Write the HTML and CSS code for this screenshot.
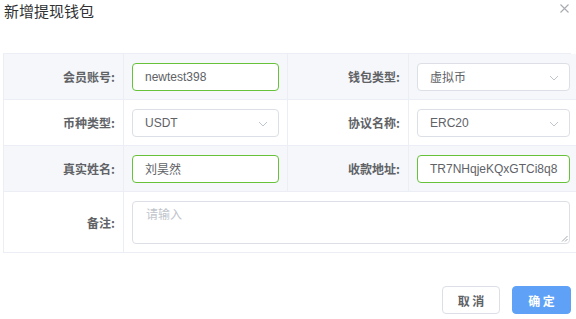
FILE: index.html
```html
<!DOCTYPE html>
<html lang="zh-CN">
<head>
<meta charset="utf-8">
<title>新增提现钱包</title>
<link rel="stylesheet" href="styles.css">
</head>
<body>
<div class="dialog">
  <div class="dialog-header">
    <span class="dialog-title">新增提现钱包</span>
    <button class="close" aria-label="关闭">
      <svg width="9" height="9" viewBox="0 0 9 9"><path d="M0.5 0.5L8.5 8.5M8.5 0.5L0.5 8.5" stroke="#a8abb2" stroke-width="1.1" fill="none"/></svg>
    </button>
  </div>
  <div class="form-table">
    <div class="cell label stripe">会员账号:</div>
    <div class="cell value stripe"><div class="input success">newtest398</div></div>
    <div class="cell label stripe">钱包类型:</div>
    <div class="cell value stripe"><div class="input select">虚拟币<svg class="arrow" width="10" height="6" viewBox="0 0 10 6"><path d="M1 1L5 5L9 1" stroke="#c0c4cc" stroke-width="1" fill="none"/></svg></div></div>

    <div class="cell label">币种类型:</div>
    <div class="cell value"><div class="input select">USDT<svg class="arrow" width="10" height="6" viewBox="0 0 10 6"><path d="M1 1L5 5L9 1" stroke="#c0c4cc" stroke-width="1" fill="none"/></svg></div></div>
    <div class="cell label">协议名称:</div>
    <div class="cell value"><div class="input select">ERC20<svg class="arrow" width="10" height="6" viewBox="0 0 10 6"><path d="M1 1L5 5L9 1" stroke="#c0c4cc" stroke-width="1" fill="none"/></svg></div></div>

    <div class="cell label stripe">真实姓名:</div>
    <div class="cell value stripe"><div class="input success">刘昊然</div></div>
    <div class="cell label stripe">收款地址:</div>
    <div class="cell value stripe"><div class="input success">TR7NHqjeKQxGTCi8q8</div></div>

    <div class="cell label tall">备注:</div>
    <div class="cell value tall span3"><div class="textarea"><span class="placeholder">请输入</span>
      <svg class="grip" width="7" height="7" viewBox="0 0 7 7"><path d="M6.5 1L1 6.5M6.5 4L4 6.5" stroke="#909399" stroke-width="0.8" fill="none"/></svg>
    </div></div>
  </div>
  <div class="footer">
    <button class="btn">取 消</button>
    <button class="btn primary">确 定</button>
  </div>
</div>
</body>
</html>
```
FILE: styles.css
```css
* { box-sizing: border-box; }
html, body { margin: 0; padding: 0; background: #fff; }
body {
  font-family: "Liberation Sans", "Noto Sans CJK SC", sans-serif;
  color: #606266;
  width: 576px;
  height: 319px;
  overflow: hidden;
}
.dialog { padding: 0 5px 0 3px; }
.dialog-header {
  display: flex;
  justify-content: space-between;
  align-items: flex-start;
  height: 53px;
}
.dialog-title {
  font-family: "Noto Sans CJK SC", sans-serif;
  font-size: 15px;
  line-height: 22px;
  color: #303133;
  padding-left: 1px;
}
.close {
  border: 0;
  background: none;
  padding: 0;
  margin: 4px 2px 0 0;
  width: 9px;
  height: 9px;
  display: flex;
}
.form-table {
  display: grid;
  grid-template-columns: 120px 164px 121px 1fr;
  grid-auto-rows: 46px 46px 46px 61px;
  border-top: 1px solid #ebeef5;
  border-left: 1px solid #ebeef5;
}
.cell {
  border-right: 1px solid #ebeef5;
  border-bottom: 1px solid #ebeef5;
  display: flex;
  align-items: center;
}
.stripe { background: #f5f7fa; }
.label {
  justify-content: flex-end;
  padding-right: 8px;
  font-family: "Noto Sans CJK SC", sans-serif;
  font-size: 12px;
  font-weight: 700;
  color: #606266;
}
.value { padding: 0 8px; }
.span3 { grid-column: span 3; }
.input {
  flex: 1;
  height: 28px;
  border: 1px solid #dcdfe6;
  border-radius: 4px;
  background: #fff;
  display: flex;
  align-items: center;
  padding: 0 12px;
  font-family: "Liberation Sans", "Noto Sans CJK SC", sans-serif;
  font-size: 12px;
  color: #606266;
  position: relative;
}
.input.success { border-color: #67c23a; }
.select .arrow { position: absolute; right: 10px; top: 11px; }
.tall { align-items: center; }
.textarea {
  flex: 1;
  height: 43px;
  border: 1px solid #dcdfe6;
  border-radius: 4px;
  background: #fff;
  padding: 4px 13px;
  position: relative;
  font-size: 12px;
  line-height: 16px;
}
.placeholder { color: #c0c4cc; font-family: "Noto Sans CJK SC", sans-serif; }
.grip { position: absolute; right: 1px; bottom: 1px; }
.footer {
  display: flex;
  justify-content: flex-end;
  gap: 12px;
  padding: 33px 0 0 0;
}
.btn {
  width: 58px;
  height: 28px;
  border: 1px solid #dcdfe6;
  border-radius: 4px;
  background: #fff;
  font-family: "Noto Sans CJK SC", sans-serif;
  font-size: 12px;
  font-weight: 700;
  color: #606266;
  padding: 0;
}
.btn.primary {
  width: 59px;
  background: #5ea1f6;
  border-color: #5ea1f6;
  color: #fff;
}
```
